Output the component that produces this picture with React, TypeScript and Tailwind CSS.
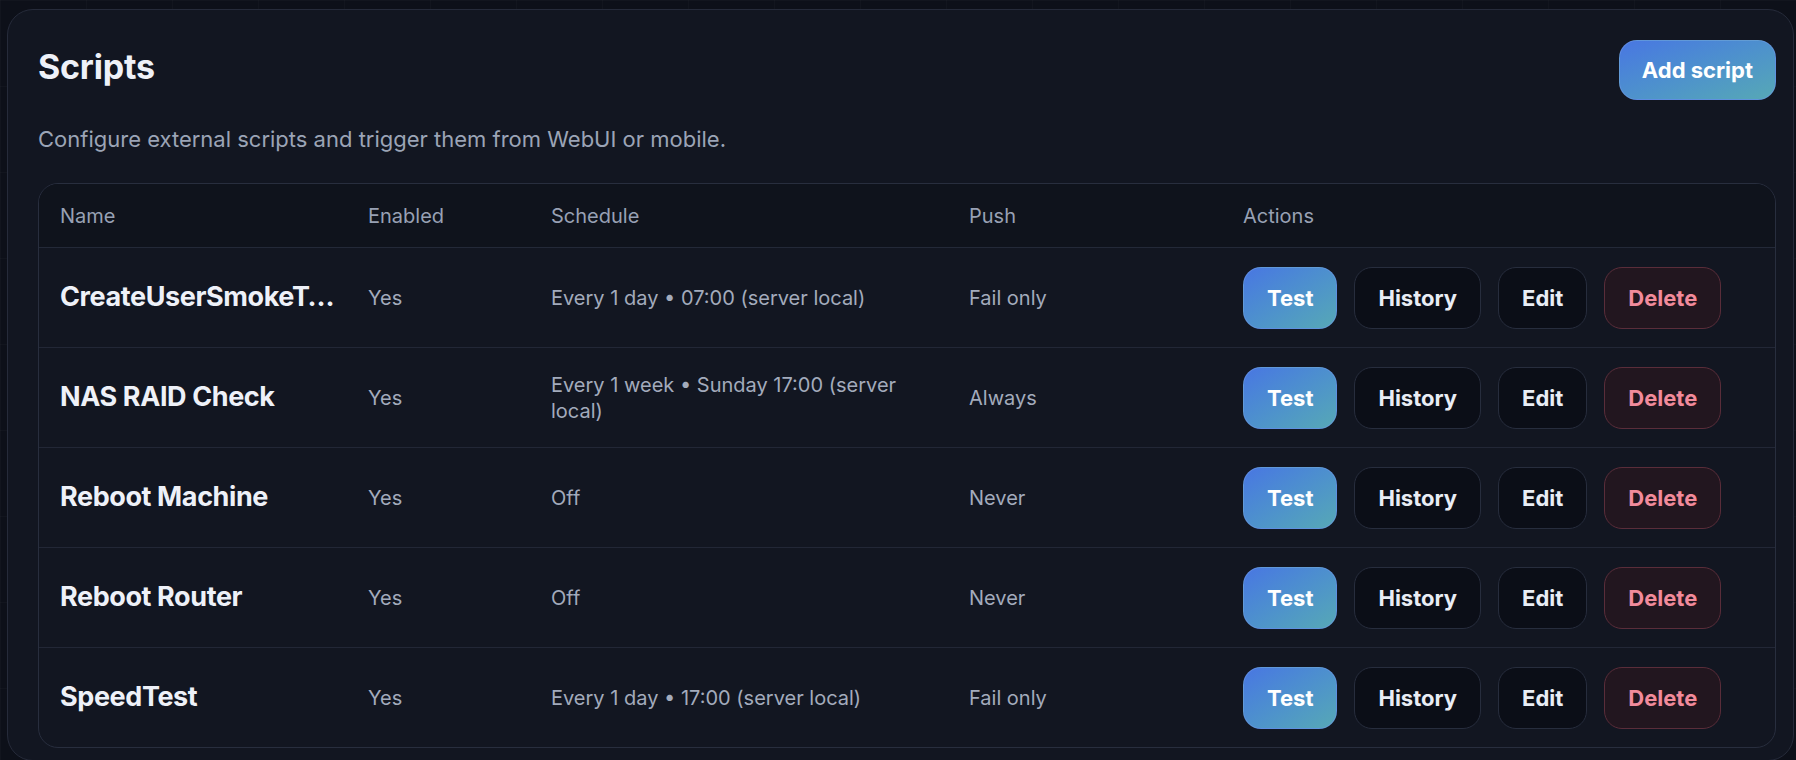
import React from 'react';

interface ScriptRow {
  name: string;
  enabled: string;
  schedule: string;
  push: string;
}

const scripts: ScriptRow[] = [
  { name: 'CreateUserSmokeTest', enabled: 'Yes', schedule: 'Every 1 day • 07:00 (server local)', push: 'Fail only' },
  { name: 'NAS RAID Check', enabled: 'Yes', schedule: 'Every 1 week • Sunday 17:00 (server local)', push: 'Always' },
  { name: 'Reboot Machine', enabled: 'Yes', schedule: 'Off', push: 'Never' },
  { name: 'Reboot Router', enabled: 'Yes', schedule: 'Off', push: 'Never' },
  { name: 'SpeedTest', enabled: 'Yes', schedule: 'Every 1 day • 17:00 (server local)', push: 'Fail only' },
];

const gridCols = 'grid grid-cols-[308px_183px_418px_274px_1fr]';

const btnBase =
  'h-[62px] px-[23px] rounded-[18px] border text-[22px] font-bold leading-none flex items-center justify-center';

const App: React.FC = () => {
  return (
    <div
      className="h-[760px] w-full overflow-hidden bg-[#0d1019] bg-[linear-gradient(to_right,rgba(255,255,255,0.018)_1px,transparent_1px),linear-gradient(to_bottom,rgba(255,255,255,0.018)_1px,transparent_1px)] bg-[size:86px_86px] pt-[9px] pl-[7px] pr-[2px]"
      style={{ fontFamily: 'Inter, "Noto Sans", sans-serif' }}
    >
      <div className="h-[752px] rounded-[26px] border border-[#262b3a] bg-[#121621] pl-[30px] pr-[17px] pt-[30px]">
        {/* Header */}
        <div className="flex items-center justify-between h-[60px]">
          <h1 className="mb-[7px] text-[34px] font-bold text-[#eef1f8] tracking-[-0.2px]">Scripts</h1>
          <button className="h-[60px] px-[22px] rounded-[18px] border border-[#6d97e6]/60 bg-gradient-to-br from-[#4976e2] to-[#57a8b5] text-white text-[22px] font-bold">
            Add script
          </button>
        </div>

        <p className="mt-[25px] text-[22px] leading-[28px] text-[#9ba4b6]">
          Configure external scripts and trigger them from WebUI or mobile.
        </p>

        {/* Table */}
        <div className="mt-[30px] rounded-[20px] border border-[#282e3e] bg-[#121621] overflow-hidden">
          <div className={`${gridCols} h-[64px] items-center border-b border-[#232938] bg-[#0f131c] text-[20px] text-[#98a1b4]`}>
            <div className="pl-[21px]">Name</div>
            <div className="pl-[21px]">Enabled</div>
            <div className="pl-[21px]">Schedule</div>
            <div className="pl-[21px]">Push</div>
            <div className="pl-[21px]">Actions</div>
          </div>

          {scripts.map((s, i) => (
            <div
              key={s.name}
              className={`${gridCols} items-center ${i < scripts.length - 1 ? 'h-[100px] border-b border-[#222736]' : 'h-[99px]'}`}
            >
              <div className="pl-[21px] truncate text-[27px] font-bold tracking-[-0.4px] text-[#eef1f8]">{s.name}</div>
              <div className="pl-[21px] text-[20px] text-[#a3abbc]">{s.enabled}</div>
              <div className="pl-[21px] pr-[22px] text-[20px] leading-[26px] text-[#a3abbc]">{s.schedule}</div>
              <div className="pl-[21px] text-[20px] text-[#a3abbc]">{s.push}</div>
              <div className="pl-[21px] flex items-center gap-[17px]">
                <button className={`${btnBase} border-[#6d97e6]/60 bg-gradient-to-br from-[#4976e2] to-[#57a8b5] text-white`}>
                  Test
                </button>
                <button className={`${btnBase} border-[#272d3d] bg-[#0b0e17] text-[#e9edf5]`}>History</button>
                <button className={`${btnBase} border-[#272d3d] bg-[#0b0e17] text-[#e9edf5]`}>Edit</button>
                <button className={`${btnBase} border-[#5a2d3a] bg-[#22161f] text-[#f28b9b]`}>Delete</button>
              </div>
            </div>
          ))}
        </div>
      </div>
    </div>
  );
};

export default App;
